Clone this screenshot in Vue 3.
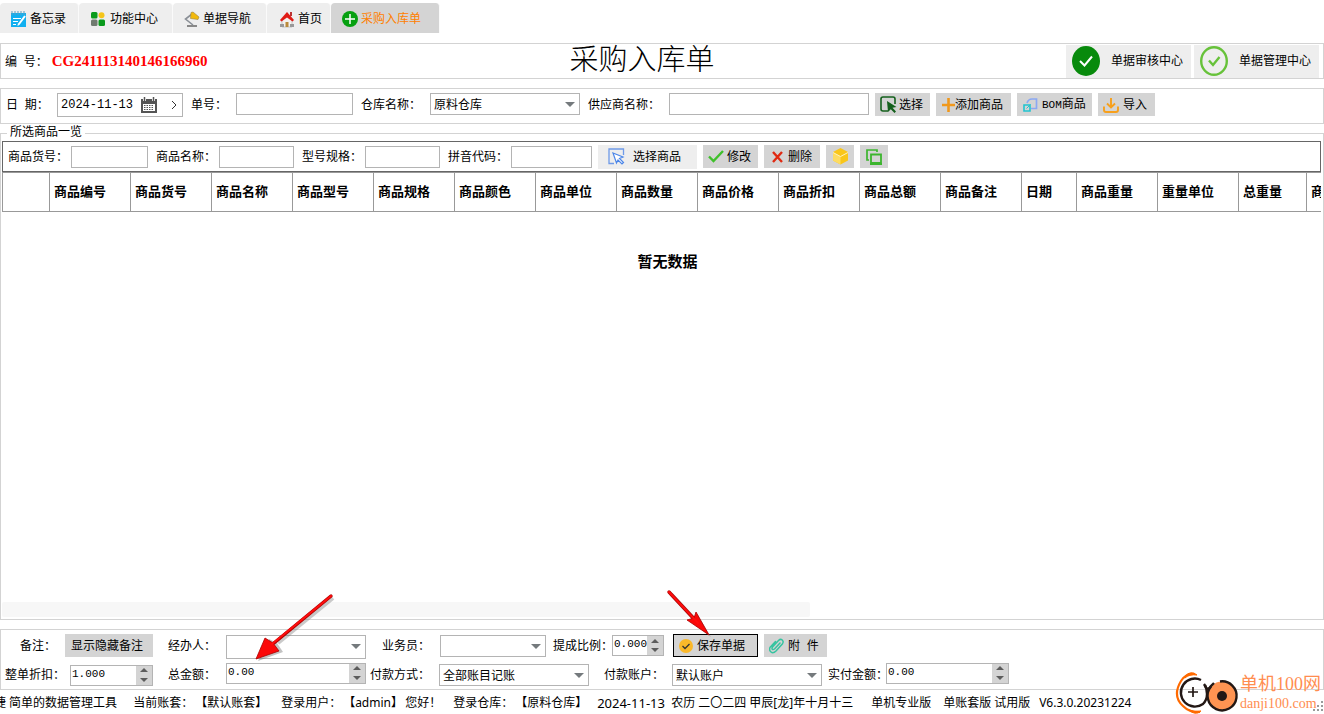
<script setup>
import { ref } from 'vue'

const tabs = [
  { id: 'memo', text: '备忘录' },
  { id: 'func', text: '功能中心' },
  { id: 'nav', text: '单据导航' },
  { id: 'home', text: '首页' },
  { id: 'order', text: '采购入库单' },
]
const active = ref('order')

const columns = [
  '', '商品编号', '商品货号', '商品名称', '商品型号', '商品规格', '商品颜色', '商品单位', '商品数量',
  '商品价格', '商品折扣', '商品总额', '商品备注', '日期', '商品重量', '重量单位', '总重量', '商品产地',
]
const colClass = (c) => (c === '' ? 'c-index' : c === '日期' ? 'c-date' : c === '总重量' ? 'c-total' : 'c-std')

const orderDate = ref('2024-11-13')
const amounts = ref({ discount: '1.000', total: '0.00', ratio: '0.000', paid: '0.00' })
const step = (key, d, n) => { amounts.value[key] = (Number(amounts.value[key]) + d).toFixed(n) }
</script>

<template>
  <div class="app">
    <nav class="tabs">
      <button v-for="t in tabs" :key="t.id" type="button" class="tab" :class="[t.id, { active: active === t.id }]" @click="active = t.id">
        <svg v-if="t.id === 'memo'" width="16" height="16" viewBox="0 0 16 16">
          <rect x="0" y="2" width="15" height="14" fill="#12b0f0" />
          <path d="M1 0v4M4 0v4M7 0v4M10 0v4M13 0v4" stroke="#5b9fc0" />
          <path d="M2 7.500h8M2 10.500h5M2 13.500h3" stroke="#fff" />
          <path d="M14 5l-6 8" stroke="#fff" stroke-width="2" /><path d="M6.500 15l.5-3 2 1.500z" fill="#fff" />
        </svg>
        <svg v-else-if="t.id === 'func'" width="14" height="14" viewBox="0 0 14 14">
          <rect width="6.500" height="6.500" rx="1.500" fill="#0a9a1c" /><circle cx="10.500" cy="3.300" r="3" fill="#f5c51a" />
          <rect y="7.500" width="6.500" height="6.500" rx="1.500" fill="#707b70" /><rect x="7.500" y="7.500" width="6.500" height="6.500" rx="1.500" fill="#0a9a1c" />
        </svg>
        <svg v-else-if="t.id === 'nav'" width="16" height="17" viewBox="0 0 16 17">
          <path d="M8 3L1.500 8 9 14" fill="none" stroke="#8a8f96" stroke-width="1.600" />
          <path d="M3 15h10" stroke="#888" stroke-width="2" />
          <path d="M7 1.500l2-.5 6 5-1 2.500-7.500-1z" fill="#f2b90c" stroke="#9a8340" stroke-width=".6" />
        </svg>
        <svg v-else-if="t.id === 'home'" width="14" height="17" viewBox="0 0 14 17">
          <path d="M2 8l5-5 5 5v8H2z" fill="#f4f1ee" stroke="#aaa" stroke-width=".6" />
          <path d="M10 1h2v4h-2z" fill="#b33" /><path d="M0 9L7 1l7 8-1.500 1.500L7 6.500 1.500 10.500z" fill="#e01b16" />
          <rect x="5.500" y="11" width="3" height="5" fill="#b98b3b" /><path d="M0 13h4v3H0zM10 13h4v3h-4z" fill="#999" />
        </svg>
        <svg v-else width="16" height="16" viewBox="0 0 16 16">
          <circle cx="8" cy="8" r="8" fill="#06a010" /><path d="M8 3v10M3 8h10" stroke="#fff" stroke-width="1.500" />
        </svg>
        <span>{{ t.text }}</span>
      </button>
    </nav>

    <header class="panel head">
      <div class="code-box">编&nbsp; 号：<strong class="code">CG241113140146166960</strong></div>
      <h1>采购入库单</h1>
      <div class="centers">
        <button type="button" class="big">
          <svg width="28" height="30" viewBox="0 0 28 30"><ellipse cx="14" cy="15" rx="14" ry="15" fill="#088a0c" /><path d="M8 15l4.500 4.500L20 10.500" fill="none" stroke="#fff" stroke-width="2" /></svg>
          <span>单据审核中心</span>
        </button>
        <button type="button" class="big">
          <svg width="28" height="30" viewBox="0 0 28 30"><ellipse cx="14" cy="15" rx="12.800" ry="13.800" fill="none" stroke="#67c23a" stroke-width="2.400" /><path d="M9 14.500l4 4.500 6.500-8" fill="none" stroke="#67c23a" stroke-width="2.400" /></svg>
          <span>单据管理中心</span>
        </button>
      </div>
    </header>

    <section class="panel filter">
      <label class="l-date" for="date">日&nbsp; 期：</label>
      <div class="date-box">
        <input id="date" v-model="orderDate" type="text" />
        <button type="button" aria-label="日历">
          <svg width="16" height="16" viewBox="0 0 16 16"><path d="M0 2h16v14H0z" fill="#555" /><path d="M2 7h12v7H2z" fill="#fff" /><path d="M3 8.500h10M3 10.500h10M3 12.500h10" stroke="#555" stroke-dasharray="1.500 1" /><path d="M3.500 0v4M12.500 0v4" stroke="#fff" stroke-width="3" /><path d="M3.500 0v4M12.500 0v4" stroke="#555" stroke-width="1.500" /></svg>
        </button>
        <button type="button" class="next" aria-label="下一天">
          <svg width="6" height="8" viewBox="0 0 6 8"><path d="M1 0l4 4-4 4" fill="none" stroke="#333" /></svg>
        </button>
      </div>
      <label class="l-no" for="no">单号：</label>
      <input id="no" class="box w-no" type="text" />
      <label class="l-wh" for="wh">仓库名称：</label>
      <span class="sel w-wh"><select id="wh"><option>原料仓库</option></select></span>
      <label class="l-sup" for="sup">供应商名称：</label>
      <input id="sup" class="box w-sup" type="text" />
      <div class="btns">
        <button type="button" class="btn b-pick">
          <svg width="17" height="17" viewBox="0 0 17 17"><path d="M8 15H3a2 2 0 0 1-2-2V3a2 2 0 0 1 2-2h10a2 2 0 0 1 2 2v5" fill="none" stroke="#14601c" stroke-width="1.600" /><path d="M7 5l9.500 6-4 .800 3.500 3.700-1.500 1.500-3.700-3.700L8 16z" fill="#14601c" /></svg>选择
        </button>
        <button type="button" class="btn b-add">
          <svg width="13" height="14" viewBox="0 0 13 14"><path d="M6.500 0v14M0 7h13" stroke="#f0981c" stroke-width="2.600" /></svg>添加商品
        </button>
        <button type="button" class="btn b-bom">
          <svg width="15" height="14" viewBox="0 0 15 14"><path d="M4 5c1-3 3-4 5-4h4.500v9.500H8" fill="none" stroke="#8ba8f2" stroke-width="1.700" /><path d="M1 7h6v6H1z" fill="none" stroke="#22c3cf" stroke-width="1.600" /><path d="M3.500 10.500l4-4" stroke="#22c3cf" /></svg><span><span class="latin">BOM</span>商品</span>
        </button>
        <button type="button" class="btn b-imp">
          <svg width="16" height="16" viewBox="0 0 16 16"><path d="M8 1v9M4 6.500l4 4 4-4M1 9.500V13q0 2 2 2h10q2 0 2-2V9.500" fill="none" stroke="#f7a01c" stroke-width="1.900" /></svg>导入
        </button>
      </div>
    </section>

    <div class="goods-area">
      <fieldset class="goods">
        <legend>所选商品一览</legend>
        <div class="toolbar">
          <label for="g1">商品货号：</label><input id="g1" class="box w-g1" type="text" />
          <label for="g2">商品名称：</label><input id="g2" class="box w-g2" type="text" />
          <label for="g3">型号规格：</label><input id="g3" class="box w-g2" type="text" />
          <label for="g4">拼音代码：</label><input id="g4" class="box w-g4" type="text" />
          <div class="btns">
            <button type="button" class="btn b-goods">
              <svg width="17" height="17" viewBox="0 0 17 17"><path d="M15.500 7V1H1v14.500h5" fill="none" stroke="#6f9ae8" stroke-width="1.300" /><path d="M5 5l10 4-3.500 1.500 4 4-1.500 1.500-4-4L8.500 15z" fill="#fff" stroke="#4c86e8" stroke-width="1.200" /></svg>选择商品
            </button>
            <button type="button" class="btn b-edit">
              <svg width="16" height="13" viewBox="0 0 16 13"><path d="M1 6.500l4.500 4.500L15 1" fill="none" stroke="#3fc02b" stroke-width="2.400" /></svg>修改
            </button>
            <button type="button" class="btn b-del">
              <svg width="11" height="12" viewBox="0 0 11 12"><path d="M1 1l9 10M10 1L1 11" stroke="#e02a12" stroke-width="2.400" /></svg>删除
            </button>
            <button type="button" class="btn b-ico" aria-label="商品">
              <svg width="15" height="17" viewBox="0 0 15 17"><path d="M7.500 0L15 4v8.500l-7.500 4-7.500-4V4z" fill="#f9c61a" /><path d="M0 4.500L7.500 8.500v8l-7.500-4z" fill="#fddc62" /><path d="M0 4.500l7.500 4 7.500-4" fill="none" stroke="#fff3c0" /></svg>
            </button>
            <button type="button" class="btn b-ico" aria-label="复制">
              <svg width="16" height="16" viewBox="0 0 16 16"><path d="M3 11H1V1h10v2" fill="none" stroke="#3cb52e" stroke-width="1.700" /><path d="M5 5.500h10V14H5z" fill="none" stroke="#3cb52e" stroke-width="1.800" /><path d="M4 15h12" stroke="#3cb52e" stroke-width="2" /></svg>
            </button>
          </div>
        </div>
        <div class="grid">
          <table>
            <thead><tr><th v-for="(c, i) in columns" :key="i" :class="colClass(c)">{{ c }}</th></tr></thead>
          </table>
          <p class="empty">暂无数据</p>
        </div>
      </fieldset>
      <div class="scroll"></div>
    </div>

    <section class="panel bottom">
      <div class="row first">
        <label class="k0" for="memo">备注：</label>
        <button id="memo" type="button" class="btn b-memo">显示隐藏备注</button>
        <label class="k1" for="agent">经办人：</label>
        <span class="sel tall w-140"><select id="agent"><option></option></select></span>
        <label class="k2" for="sales">业务员：</label>
        <span class="sel w-106"><select id="sales"><option></option></select></span>
        <label class="k3" for="ratio">提成比例：</label>
        <span class="spin w-52"><input id="ratio" v-model="amounts.ratio" type="text" /><span class="arrows"><button type="button" aria-label="增加" @click="step('ratio', 1, 3)"></button><button type="button" class="dn" aria-label="减少" @click="step('ratio', -1, 3)"></button></span></span>
        <button type="button" class="btn b-save">
          <svg width="14" height="14" viewBox="0 0 14 14"><circle cx="7" cy="7" r="7" fill="#fbb829" /><path d="M3.500 7l2.500 2.500L10.500 5" fill="none" stroke="#333" stroke-width="1.300" /></svg>保存单据
        </button>
        <button type="button" class="btn b-att">
          <svg width="15" height="16" viewBox="0 0 15 16"><path d="M11 5L5.500 11q-1.500 1-2.200.2T3.500 9L9.500 2.500q2-2 3.700-.5t.3 3.700L7 13q-2.800 2.700-5 1T1 9.500L6.500 3.500" fill="none" stroke="#35c4a0" stroke-width="1.500" stroke-linecap="round" /></svg>附&nbsp; 件
        </button>
      </div>
      <div class="row">
        <label class="m0" for="disc">整单折扣：</label>
        <span class="spin w-83"><input id="disc" v-model="amounts.discount" type="text" /><span class="arrows"><button type="button" aria-label="增加" @click="step('discount', 1, 3)"></button><button type="button" class="dn" aria-label="减少" @click="step('discount', -1, 3)"></button></span></span>
        <label class="k1" for="total">总金额：</label>
        <span class="spin up w-140"><input id="total" v-model="amounts.total" type="text" /><span class="arrows"><button type="button" aria-label="增加" @click="step('total', 1, 2)"></button><button type="button" class="dn" aria-label="减少" @click="step('total', -1, 2)"></button></span></span>
        <label class="m2" for="pay">付款方式：</label>
        <span class="sel w-150"><select id="pay"><option>全部账目记账</option></select></span>
        <label class="m3" for="acc">付款账户：</label>
        <span class="sel w-150"><select id="acc"><option>默认账户</option></select></span>
        <label class="m4" for="paid">实付金额：</label>
        <span class="spin up w-123"><input id="paid" v-model="amounts.paid" type="text" /><span class="arrows"><button type="button" aria-label="增加" @click="step('paid', 1, 2)"></button><button type="button" class="dn" aria-label="减少" @click="step('paid', -1, 2)"></button></span></span>
      </div>
    </section>

    <footer class="status">
      <span class="s0">捷 简单的数据管理工具</span>
      <span class="s1">当前账套：</span>
      <span class="s2">【默认账套】</span>
      <span class="s1">登录用户：</span>
      <span class="s3">【admin】</span>
      <span class="s4">您好！</span>
      <span class="s1">登录仓库：</span>
      <span class="s5">【原料仓库】</span>
      <span class="s6">2024-11-13</span>
      <span class="s7">农历 二〇二四 甲辰[龙]年十月十三</span>
      <span class="s8">单机专业版</span>
      <span class="s9">单账套版 试用版</span>
      <span>V6.3.0.20231224</span>
    </footer>

    <svg class="arrow a1" width="86" height="72" viewBox="0 0 86 72">
      <path d="M79 5L24 50" stroke="#666" stroke-opacity=".35" stroke-width="4" />
      <path d="M4 68L15 46l8 4 6 9z" fill="#666" fill-opacity=".4" />
      <path d="M77 3L20 50" stroke="#b00000" stroke-width="3.400" stroke-linecap="round" />
      <path d="M2 66L11 45l8 5 6 8z" fill="#fb0808" stroke="#a00" stroke-width=".8" />
      <path d="M77 3L18 51" stroke="#ff0d0d" stroke-width="2" stroke-linecap="round" />
    </svg>
    <svg class="arrow a2" width="52" height="54" viewBox="0 0 52 54">
      <path d="M6 6L34 36" stroke="#666" stroke-opacity=".35" stroke-width="4" />
      <path d="M46 49L25 33l8-6z" fill="#666" fill-opacity=".4" />
      <path d="M4 4L32 34" stroke="#b00000" stroke-width="3.400" stroke-linecap="round" />
      <path d="M44 47L22 32l7-2 2-6z" fill="#fb0808" stroke="#a00" stroke-width=".8" />
      <path d="M4 4L33 35" stroke="#ff0d0d" stroke-width="2" stroke-linecap="round" />
    </svg>

    <div class="brand">
      <svg width="64" height="42" viewBox="0 0 64 42">
        <path d="M20 2Q11 1 6 9Q-3 24 8 34Q15 41 25 40" fill="none" stroke="#ff6a00" stroke-width="2.200" />
        <path d="M10 4Q16-2 22 3Q14 2 10 6zM14 38q6 6 12 1q-6 1-12-1z" fill="#ff6a00" stroke="#ff6a00" />
        <path d="M26 8A14 14 0 1 0 28 32Q32 28 32 22Q32 16 29 12" fill="none" stroke="#231815" stroke-width="2.400" />
        <path d="M18 15v10M13 20h10" stroke="#231815" stroke-width="1.700" />
        <circle cx="47" cy="24" r="14.500" fill="#ff9452" />
        <path d="M45 9.500A14.500 14.500 0 1 1 36 14.500" fill="none" stroke="#231815" stroke-width="2.400" />
        <circle cx="47" cy="24" r="5" fill="#231815" /><path d="M30 13q2 7 6 1l3-3" fill="none" stroke="#231815" stroke-width="2.400" />
      </svg>
      <div><div class="b-name">单机100网</div><div class="b-url">danji100.com</div></div>
    </div>
    <svg class="grip" width="10" height="10" viewBox="0 0 10 10"><path d="M8 0h2v2H8zM4 4h2v2H4zM8 4h2v2H8zM0 8h2v2H0zM4 8h2v2H4zM8 8h2v2H8z" fill="#9a9a9a" /></svg>
  </div>
</template>

<style>
body { margin: 0; background: #fff; }
</style>
<style scoped>
.app { position: relative; display: flex; flex-direction: column; box-sizing: border-box; min-height: 100vh; padding-top: 3px; overflow: hidden; font: 12px/16px "Liberation Sans", "Noto Sans CJK SC", sans-serif; color: #000; white-space: nowrap; }
.app *, .app *::after { box-sizing: border-box; }
svg { flex: none; display: block; }
button, input, select { font: inherit; color: inherit; margin: 0; padding: 0; border: 0; border-radius: 0; outline: 0; }
label { flex: none; }

.tabs { display: flex; height: 30px; }
.tab { display: flex; align-items: center; gap: 3px; padding: 2px 0 0 11px; background: #eee; border-radius: 4px 4px 0 0; border-right: 1px solid #fafafa; }
.tab.memo { width: 79px; }
.tab.func { width: 94px; gap: 5px; padding-left: 12px; }
.tab.nav { width: 94px; }
.tab.home { width: 64px; gap: 4px; padding-left: 13px; }
.tab.order { width: 109px; }
.tab.active { background: #d4d4d4; color: #ff8000; }

.panel { border: 1px solid #d3d3d3; display: flex; }
.head { margin-top: 10px; height: 36px; align-items: center; }
.code-box { flex: 1; padding-left: 4px; }
.code { font: bold 15px/16px "Liberation Serif", serif; color: #f00; margin-left: 4px; }
h1 { margin: 0 0 2px; padding-right: 40px; font-weight: 300; font-size: 29px; line-height: 30px; }
.centers { flex: 1; display: flex; justify-content: flex-end; gap: 3px; padding-right: 4px; }
.big { display: flex; align-items: center; gap: 11px; width: 125px; height: 33px; padding-left: 6px; background: #eee; }

.filter { margin-top: 9px; height: 36px; padding: 4px 0 0 5px; align-items: flex-start; }
.filter label { line-height: 24px; }
.box { height: 22px; border: 1px solid #b4b4b4; background: #fff; padding: 0 3px; min-width: 0; }
.date-box { display: flex; align-items: center; width: 126px; height: 24px; border: 1px solid #b4b4b4; padding-left: 3px; margin-right: 8px; }
.date-box input { width: 80px; font-family: "Liberation Mono", monospace; background: none; }
.date-box button { background: none; }
.date-box .next { margin-left: 14px; }
.l-date { width: 51px; }
.l-no { width: 45px; }
.w-no { width: 117px; margin-right: 8px; }
.l-wh { width: 69px; }
.w-wh { width: 150px; margin-right: 8px; }
.l-sup { width: 81px; }
.w-sup { width: 200px; }
.sel { position: relative; flex: none; height: 22px; border: 1px solid #b4b4b4; background: #fff; }
.sel.tall { height: 24px; margin-top: 3px; }
.sel select { display: block; width: 100%; height: 100%; appearance: none; background: none; padding: 1px 0 0 3px; }
.sel::after { content: ""; position: absolute; right: 4px; top: 8px; border: 5px solid transparent; border-top-color: #757a7d; border-bottom: 0; pointer-events: none; }
.btns { display: flex; gap: 6px; margin-left: 6px; align-items: center; }
.btn { flex: none; display: flex; align-items: center; height: 23px; background: #d4d4d4; }
.b-pick { width: 55px; padding-left: 5px; gap: 2px; }
.b-add { width: 75px; padding-left: 6px; }
.b-bom { width: 75px; padding-left: 6px; gap: 4px; }
.latin { font: 11px/16px "Liberation Mono", monospace; }
.b-imp { width: 57px; padding-left: 5px; gap: 4px; }

.goods-area { flex: 1; display: grid; grid-template: minmax(0, 1fr) / minmax(0, 1fr); margin-top: 1px; }
.goods { grid-area: 1 / 1; min-width: 0; margin: 0; padding: 0 1px 18px; border: 1px solid #d3d3d3; }
.scroll { grid-area: 1 / 1; align-self: end; width: 61%; height: 15px; margin: 0 0 3px 2px; background: #f7f7f7; border-radius: 2px; }
legend { margin-left: 5px; padding: 0 3px; height: 16px; line-height: 14px; }
.toolbar { display: flex; align-items: center; height: 31px; margin-right: 1px; border: 1px solid #666; padding-left: 5px; }
.toolbar label { width: 63px; }
.w-g1 { width: 77px; margin-right: 8px; }
.w-g2 { width: 75px; margin-right: 8px; }
.w-g4 { width: 81px; }
.b-goods { width: 99px; height: 24px; padding-left: 10px; gap: 8px; background: #eee; }
.b-edit { width: 55px; padding-left: 5px; gap: 3px; }
.b-del { width: 56px; padding-left: 8px; gap: 5px; }
.b-ico { width: 28px; justify-content: center; }
.grid { overflow: hidden; margin-right: 1px; }
table { width: max-content; table-layout: fixed; border-collapse: separate; border-spacing: 0; }
th { height: 40px; padding: 0 0 0 4px; text-align: left; font-size: 13px; font-weight: bold; border: 1px solid #999; border-left: 0; overflow: hidden; }
.c-index { width: 48px; min-width: 48px; border-left: 1px solid #999; }
.c-std { width: 81px; min-width: 81px; }
.c-date { width: 55px; min-width: 55px; }
.c-total { width: 68px; min-width: 68px; }
.empty { margin: 0; padding: 39px 0 0 12px; text-align: center; font-size: 15px; line-height: 22px; font-weight: bold; }

.bottom { flex-direction: column; margin-top: 9px; height: 61px; }
.row { display: flex; align-items: center; height: 28px; }
.row.first { height: 31px; }
.k0 { width: 64px; padding-left: 19px; }
.b-memo { width: 88px; padding-left: 6px; }
.k1 { width: 73px; padding-left: 15px; }
.k2 { width: 74px; padding-left: 16px; }
.k3 { width: 66px; padding-left: 7px; }
.m0 { width: 69px; padding-left: 4px; }
.m2 { width: 73px; padding-left: 4px; }
.m3 { width: 83px; padding-left: 15px; }
.m4 { width: 64px; padding-left: 6px; }
.w-52 { width: 52px; }
.w-83 { width: 83px; }
.w-106 { width: 106px; }
.w-123 { width: 123px; }
.w-140 { width: 140px; }
.w-150 { width: 150px; }
.spin { flex: none; display: flex; height: 21px; border: 1px solid #b4b4b4; }
.spin.up { margin-bottom: 4px; }
.spin input { flex: 1; min-width: 0; height: 17px; padding-left: 1px; font: 11px/17px "Liberation Mono", monospace; }
.arrows { display: flex; flex-direction: column; width: 16px; background: #d4d4d4; }
.arrows button { flex: 1; display: flex; align-items: center; justify-content: center; background: none; }
.arrows button::after { content: ""; border: 4px solid transparent; border-bottom-color: #5c5c5c; border-top: 0; }
.arrows .dn::after { border: 4px solid transparent; border-top-color: #5c5c5c; border-bottom: 0; }
.b-save { width: 85px; margin: 0 6px 0 9px; padding-left: 5px; gap: 4px; border: 1px solid #000; }
.b-att { width: 63px; padding-left: 5px; gap: 4px; }

.status { display: flex; height: 24px; line-height: 26px; font-family: "Noto Sans", "Noto Sans CJK SC", sans-serif; }
.status span { flex: none; }
.s0 { margin: 0 16px 0 -6px; }
.s1 { width: 62px; }
.s2 { width: 86px; }
.s3 { width: 62px; }
.s4 { width: 48px; }
.s5 { width: 82px; }
.s6 { width: 74px; font-size: 13px; }
.s7 { width: 200px; }
.s8 { width: 72px; }
.s9 { width: 96px; }

.arrow { position: absolute; pointer-events: none; }
.a1 { left: 254px; bottom: 49px; }
.a2 { left: 665px; bottom: 72px; }
.brand { position: absolute; right: 3px; bottom: 0; display: flex; gap: 1px; color: #ff8d50; }
.b-name { font: 18px/24px "Liberation Serif", "Noto Sans CJK SC", serif; }
.b-url { font: 14px/16px "Liberation Serif", serif; }
.grip { position: absolute; right: 1px; bottom: 3px; }
</style>
